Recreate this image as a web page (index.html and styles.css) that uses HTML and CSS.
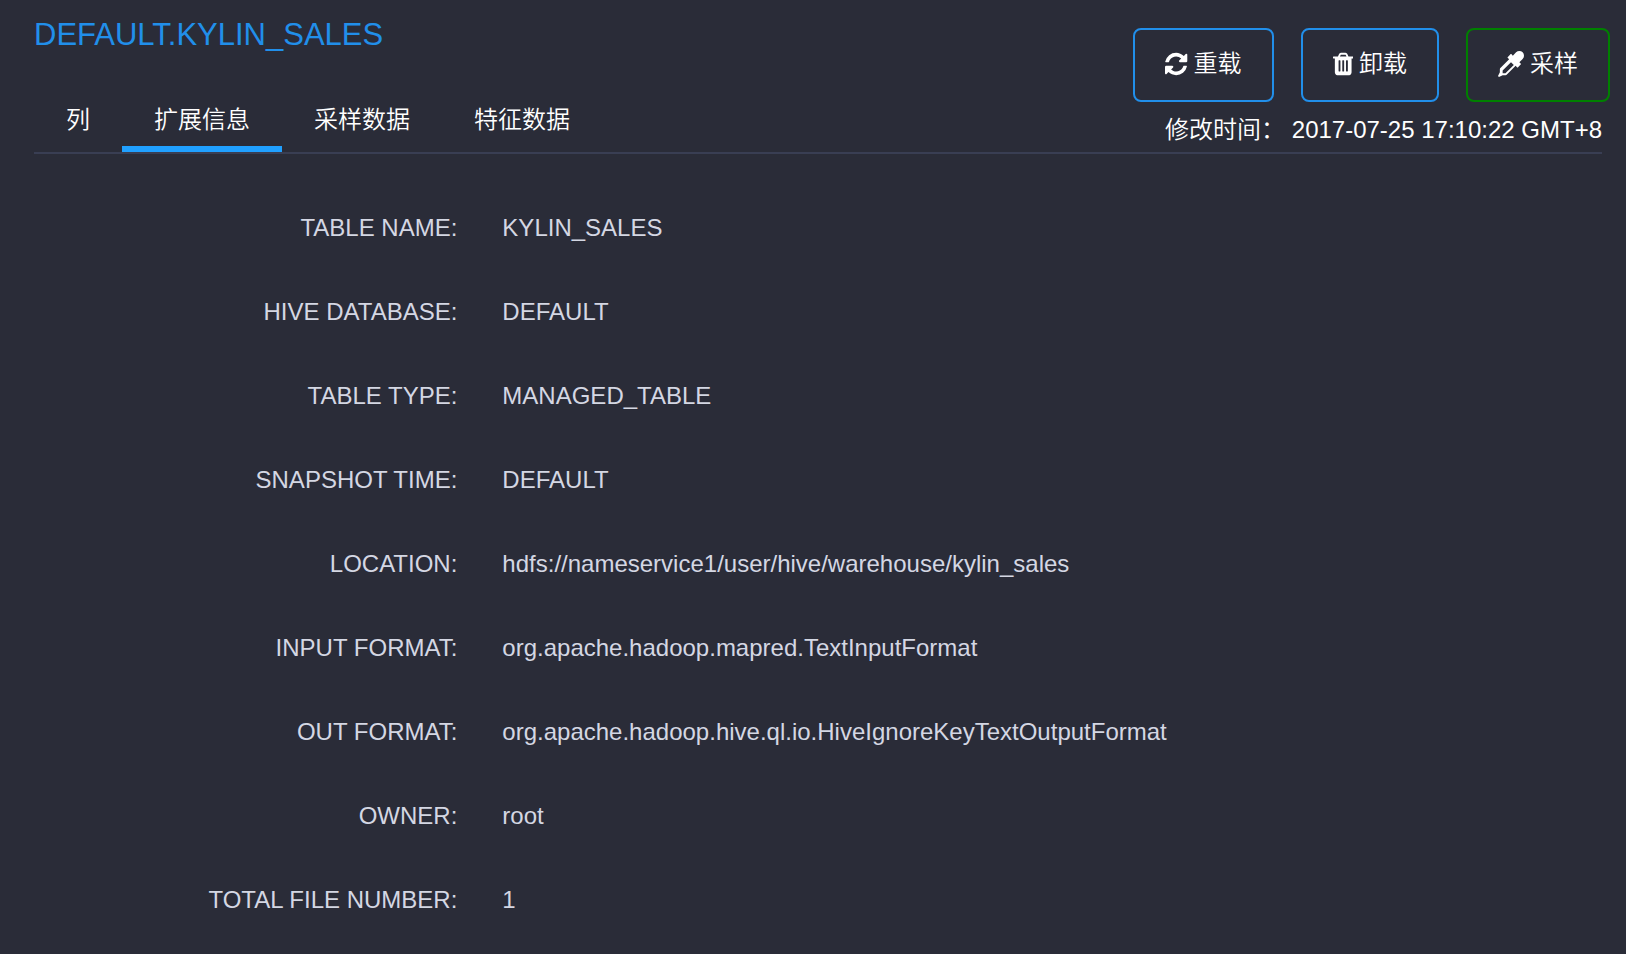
FILE: index.html
```html
<!DOCTYPE html>
<html lang="zh-CN">
<head>
<meta charset="utf-8">
<title>DEFAULT.KYLIN_SALES</title>
<link rel="stylesheet" href="styles.css">
</head>
<body>
<main class="page">
  <header class="header">
    <div class="heading">
      <h1 class="title">DEFAULT.KYLIN_SALES</h1>
      <div class="tabs" role="tablist">
        <button class="tab" type="button" role="tab" aria-selected="false">列</button>
        <button class="tab tab-active" type="button" role="tab" aria-selected="true">扩展信息</button>
        <button class="tab" type="button" role="tab" aria-selected="false">采样数据</button>
        <button class="tab" type="button" role="tab" aria-selected="false">特征数据</button>
      </div>
    </div>
    <div class="side">
      <div class="actions">
        <button class="btn" type="button">
          <svg class="icon" viewBox="128 0 1536 1792" aria-hidden="true"><path d="M1639 1056q0 5-1 7-64 268-268 434.500t-478 166.500q-146 0-282.500-55t-243.500-157l-129 129q-19 19-45 19t-45-19-19-45v-448q0-26 19-45t45-19h448q26 0 45 19t19 45-19 45l-137 137q71 66 161 102t187 36q134 0 250-65t186-179q11-17 53-117 8-23 30-23h192q13 0 22.500 9.500t9.500 22.500zm25-800v448q0 26-19 45t-45 19h-448q-26 0-45-19t-19-45 19-45l138-138q-148-137-349-137-134 0-250 65t-186 179q-11 17-53 117-8 23-30 23h-199q-13 0-22.500-9.500t-9.500-22.500v-7q65-268 270-434.500t480-166.500q146 0 284 55.500t245 156.500l130-129q19-19 45-19t45 19 19 45z"/></svg>
          <span>重载</span>
        </button>
        <button class="btn" type="button">
          <svg class="icon" viewBox="192 0 1408 1792" aria-hidden="true"><path d="M704 1376v-704q0-14-9-23t-23-9h-64q-14 0-23 9t-9 23v704q0 14 9 23t23 9h64q14 0 23-9t9-23zm256 0v-704q0-14-9-23t-23-9h-64q-14 0-23 9t-9 23v704q0 14 9 23t23 9h64q14 0 23-9t9-23zm256 0v-704q0-14-9-23t-23-9h-64q-14 0-23 9t-9 23v704q0 14 9 23t23 9h64q14 0 23-9t9-23zm-544-992h448l-48-117q-7-9-17-11h-317q-10 2-17 11zm928 32v64q0 14-9 23t-23 9h-96v948q0 83-47 143.500t-113 60.500h-832q-66 0-113-58.500t-47-141.500v-952h-96q-14 0-23-9t-9-23v-64q0-14 9-23t23-9h309l70-167q15-37 54-63t79-26h320q40 0 79 26t54 63l70 167h309q14 0 23 9t9 23z"/></svg>
          <span>卸载</span>
        </button>
        <button class="btn btn-sample" type="button">
          <svg class="icon" viewBox="0 0 1792 1792" aria-hidden="true"><path d="M1698 94q94 94 94 226.500t-94 225.500l-225 223 104 104q10 10 10 23t-10 23l-210 210q-10 10-23 10t-23-10l-105-105-603 603q-37 37-90 37h-203l-256 128-64-64 128-256v-203q0-53 37-90l603-603-105-105q-10-10-10-23t10-23l210-210q10-10 23-10t23 10l104 104 223-225q93-94 225.500-94t226.500 94zm-1186 1442l576-576-192-192-576 576v192h192z"/></svg>
          <span>采样</span>
        </button>
      </div>
      <p class="modified">修改时间： <time datetime="2017-07-25T17:10:22+08:00">2017-07-25 17:10:22 GMT+8</time></p>
    </div>
  </header>
  <dl class="info">
    <dt>TABLE NAME:</dt><dd>KYLIN_SALES</dd>
    <dt>HIVE DATABASE:</dt><dd>DEFAULT</dd>
    <dt>TABLE TYPE:</dt><dd>MANAGED_TABLE</dd>
    <dt>SNAPSHOT TIME:</dt><dd>DEFAULT</dd>
    <dt>LOCATION:</dt><dd>hdfs://nameservice1/user/hive/warehouse/kylin_sales</dd>
    <dt>INPUT FORMAT:</dt><dd>org.apache.hadoop.mapred.TextInputFormat</dd>
    <dt>OUT FORMAT:</dt><dd>org.apache.hadoop.hive.ql.io.HiveIgnoreKeyTextOutputFormat</dd>
    <dt>OWNER:</dt><dd>root</dd>
    <dt>TOTAL FILE NUMBER:</dt><dd>1</dd>
  </dl>
</main>
</body>
</html>
```
FILE: styles.css
```css
* {
  box-sizing: border-box;
}

body {
  margin: 0;
  background: #2a2c38;
  color: #fff;
  font: 350 24px/36px "Liberation Sans", "Noto Sans CJK SC", sans-serif;
}

button {
  margin: 0;
  background: none;
  color: inherit;
  font: inherit;
  cursor: pointer;
}

.page {
  padding: 0 24px 0 34px;
}

.header {
  display: flex;
  justify-content: space-between;
  border-bottom: 2px solid #393e53;
}

.heading {
  display: flex;
  flex-direction: column;
  justify-content: space-between;
}

.title {
  margin: 0;
  padding-top: 17px;
  color: #218fea;
  font-size: 31px;
  font-weight: 400;
}

.tabs {
  display: flex;
}

.tab {
  padding: 0 32px 8px;
  border: 0;
  border-bottom: 6px solid transparent;
}

.tab-active {
  border-bottom-color: #20a0ff;
}

.side {
  display: flex;
  flex-direction: column;
  align-items: flex-end;
  padding-top: 28px;
}

.actions {
  display: flex;
  gap: 27px;
  margin-right: -8px;
}

.btn {
  display: flex;
  align-items: center;
  gap: 6px;
  padding: 16px 30px 18px;
  border: 2px solid #218fea;
  border-radius: 8px;
}

.btn-sample {
  border-color: #008000;
}

.icon {
  height: 26px;
  fill: currentColor;
}

.modified {
  margin: 0;
  padding: 10px 0 4px;
}

.info {
  display: grid;
  grid-template-columns: 27% 1fr;
  column-gap: 45px;
  margin: 32px 0 0;
  color: #d4d7e3;
  line-height: 84px;
}

.info dt {
  text-align: right;
}

.info dd {
  margin: 0;
}
```
